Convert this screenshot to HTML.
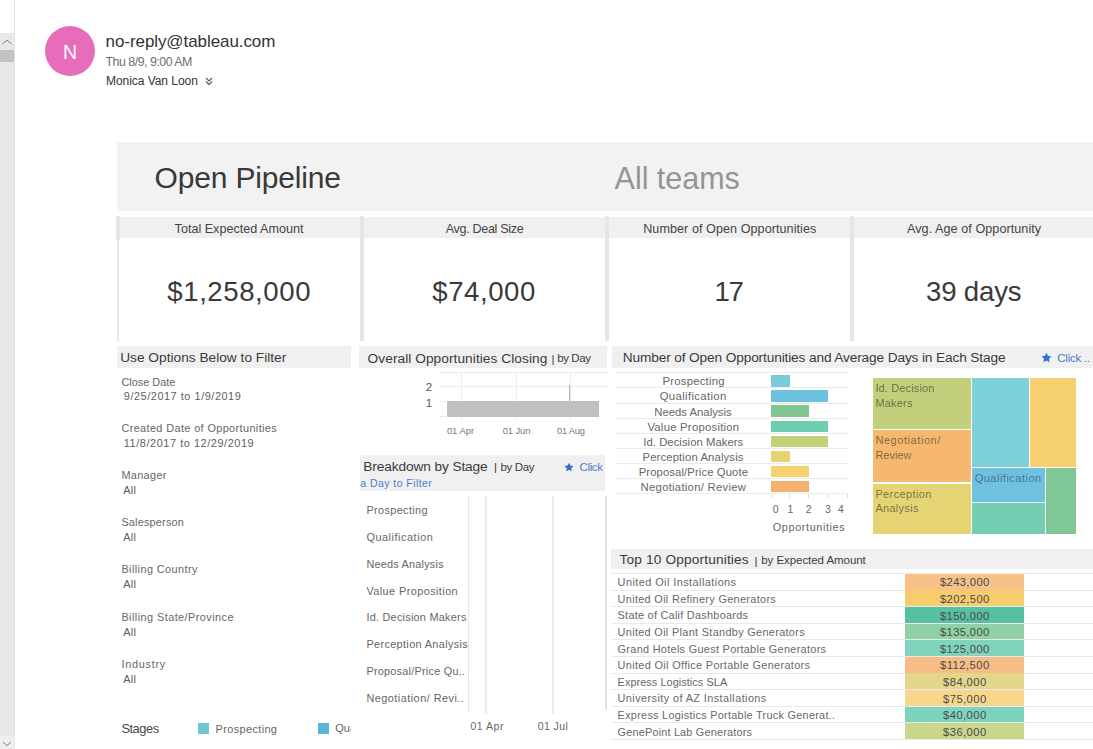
<!DOCTYPE html>
<html><head><meta charset="utf-8"><style>
html,body{margin:0;padding:0;background:#fff;width:1093px;height:749px;overflow:hidden;position:relative}
.t{position:absolute;white-space:nowrap;line-height:1;font-family:"Liberation Sans",sans-serif}
</style></head><body>
<div style="position:absolute;left:0.0px;top:33.0px;width:14.0px;height:716.0px;background:#e8e8e8;"></div>
<div style="position:absolute;left:14.0px;top:0.0px;width:1.0px;height:749.0px;background:#e3e3e3;"></div>
<div style="position:absolute;left:0.0px;top:50.0px;width:14.0px;height:12.0px;background:#c2c2c2;"></div>
<svg style="position:absolute;left:0;top:35px" width="14" height="14"><path d="M2.5 9 L7 5.2 L11.5 9" fill="none" stroke="#7a7a7a" stroke-width="1"/></svg>
<div style="position:absolute;left:0.0px;top:736.0px;width:14.0px;height:13.0px;background:#efefef;"></div>
<svg style="position:absolute;left:0;top:737px" width="14" height="12"><path d="M3 5 L7 8.6 L11 5" fill="none" stroke="#7a7a7a" stroke-width="1"/></svg>
<div style="position:absolute;left:45px;top:26px;width:50px;height:50px;border-radius:50%;background:#e76dba"></div>
<svg style="position:absolute;left:204px;top:76px" width="10" height="10"><path d="M2 2 L5 5 L8 2 M2 5.5 L5 8.5 L8 5.5" fill="none" stroke="#555" stroke-width="1.1"/></svg>
<div style="position:absolute;left:117.0px;top:141.5px;width:976.0px;height:69.0px;background:#f2f2f2;"></div>
<div style="position:absolute;left:117.0px;top:217.0px;width:243.0px;height:21.0px;background:#f0f0f0;"></div>
<div style="position:absolute;left:364.0px;top:217.0px;width:241.0px;height:21.0px;background:#f0f0f0;"></div>
<div style="position:absolute;left:609.0px;top:217.0px;width:241.0px;height:21.0px;background:#f0f0f0;"></div>
<div style="position:absolute;left:854.0px;top:217.0px;width:239.0px;height:21.0px;background:#f0f0f0;"></div>
<div style="position:absolute;left:116.2px;top:216.0px;width:3.6px;height:23.6px;background:#e6e6e6;"></div>
<div style="position:absolute;left:117.0px;top:239.6px;width:2.2px;height:101.4px;background:#e6e6e6;"></div>
<div style="position:absolute;left:360.0px;top:216.0px;width:4.0px;height:125.0px;background:#e6e6e6;"></div>
<div style="position:absolute;left:605.0px;top:216.0px;width:4.0px;height:125.0px;background:#e6e6e6;"></div>
<div style="position:absolute;left:850.0px;top:216.0px;width:4.0px;height:125.0px;background:#e6e6e6;"></div>
<div style="position:absolute;left:117.0px;top:346.0px;width:234.0px;height:21.7px;background:#f0f0f0;"></div>
<div style="position:absolute;left:359.0px;top:346.0px;width:247.5px;height:21.7px;background:#f0f0f0;"></div>
<div style="position:absolute;left:611.5px;top:346.0px;width:481.5px;height:21.7px;background:#f0f0f0;"></div>
<svg style="position:absolute;left:1041px;top:351.5px" width="11" height="11" viewBox="0 0 24 24"><path d="M12.00 1.50 L15.29 8.47 L22.94 9.45 L17.33 14.73 L18.76 22.30 L12.00 18.60 L5.24 22.30 L6.67 14.73 L1.06 9.45 L8.71 8.47 Z" fill="#2f6fd6"/></svg>
<div style="position:absolute;left:197.8px;top:722.9px;width:11.0px;height:10.7px;background:#6cc7d3;"></div>
<div style="position:absolute;left:318.1px;top:722.9px;width:10.8px;height:10.7px;background:#5ab5d8;"></div>
<div style="position:absolute;left:335px;top:718px;width:16px;height:20px;overflow:hidden"><div style="position:absolute;left:0.3px;top:5px;font:11px/1 'Liberation Sans';color:#666;white-space:nowrap">Qualification</div></div>
<div style="position:absolute;left:440.4px;top:371.5px;width:167.6px;height:1.0px;background:#ececec;"></div>
<div style="position:absolute;left:440.4px;top:385.9px;width:167.6px;height:1.0px;background:#ececec;"></div>
<div style="position:absolute;left:440.4px;top:401.0px;width:5.6px;height:1.0px;background:#ececec;"></div>
<div style="position:absolute;left:440.4px;top:416.3px;width:5.6px;height:1.0px;background:#ececec;"></div>
<div style="position:absolute;left:461.0px;top:372.0px;width:1.0px;height:49.0px;background:#ececec;"></div>
<div style="position:absolute;left:515.5px;top:372.0px;width:1.0px;height:49.0px;background:#ececec;"></div>
<div style="position:absolute;left:570.0px;top:372.0px;width:1.0px;height:49.0px;background:#ececec;"></div>
<div style="position:absolute;left:446.9px;top:401.3px;width:152.5px;height:15.5px;background:#c0c0c0;"></div>
<div style="position:absolute;left:569.2px;top:385.3px;width:1.2px;height:16.2px;background:#b0b0b0;"></div>
<div style="position:absolute;left:360.0px;top:455.0px;width:245.0px;height:36.0px;background:#f0f0f0;"></div>
<svg style="position:absolute;left:563.8px;top:461.5px" width="10" height="10" viewBox="0 0 24 24"><path d="M12.00 1.50 L15.29 8.47 L22.94 9.45 L17.33 14.73 L18.76 22.30 L12.00 18.60 L5.24 22.30 L6.67 14.73 L1.06 9.45 L8.71 8.47 Z" fill="#2f6fd6"/></svg>
<div style="position:absolute;left:467.7px;top:496.0px;width:1.2px;height:215.0px;background:#e6e6e6;"></div>
<div style="position:absolute;left:485.4px;top:496.0px;width:1.2px;height:217.8px;background:#ececec;"></div>
<div style="position:absolute;left:552.4px;top:496.0px;width:1.2px;height:217.8px;background:#ececec;"></div>
<div style="position:absolute;left:605.3px;top:496.0px;width:1.7px;height:214.0px;background:#e3e3e3;"></div>
<div style="position:absolute;left:616.0px;top:372.2px;width:232.0px;height:1.0px;background:#ececec;"></div>
<div style="position:absolute;left:616.0px;top:387.3px;width:232.0px;height:1.0px;background:#ececec;"></div>
<div style="position:absolute;left:616.0px;top:402.5px;width:232.0px;height:1.0px;background:#ececec;"></div>
<div style="position:absolute;left:616.0px;top:417.6px;width:232.0px;height:1.0px;background:#ececec;"></div>
<div style="position:absolute;left:616.0px;top:432.8px;width:232.0px;height:1.0px;background:#ececec;"></div>
<div style="position:absolute;left:616.0px;top:447.9px;width:232.0px;height:1.0px;background:#ececec;"></div>
<div style="position:absolute;left:616.0px;top:463.1px;width:232.0px;height:1.0px;background:#ececec;"></div>
<div style="position:absolute;left:616.0px;top:478.2px;width:232.0px;height:1.0px;background:#ececec;"></div>
<div style="position:absolute;left:616.0px;top:493.4px;width:232.0px;height:1.0px;background:#ececec;"></div>
<div style="position:absolute;left:771.0px;top:375.1px;width:19.0px;height:11.6px;background:#78cbd7;"></div>
<div style="position:absolute;left:771.0px;top:390.2px;width:57.0px;height:11.6px;background:#6ec0df;"></div>
<div style="position:absolute;left:771.0px;top:405.3px;width:38.0px;height:11.6px;background:#80c592;"></div>
<div style="position:absolute;left:771.0px;top:420.5px;width:57.0px;height:11.6px;background:#6fcdb2;"></div>
<div style="position:absolute;left:771.0px;top:435.6px;width:57.0px;height:11.6px;background:#c3cf79;"></div>
<div style="position:absolute;left:771.0px;top:450.7px;width:19.0px;height:11.6px;background:#e5d470;"></div>
<div style="position:absolute;left:771.0px;top:465.8px;width:38.0px;height:11.6px;background:#f7d170;"></div>
<div style="position:absolute;left:771.0px;top:480.9px;width:38.0px;height:11.6px;background:#f5b26e;"></div>
<div style="position:absolute;left:770.8px;top:494.0px;width:1.0px;height:4.0px;background:#dddddd;"></div>
<div style="position:absolute;left:789.1px;top:494.0px;width:1.0px;height:4.0px;background:#dddddd;"></div>
<div style="position:absolute;left:808.2px;top:494.0px;width:1.0px;height:4.0px;background:#dddddd;"></div>
<div style="position:absolute;left:827.3px;top:494.0px;width:1.0px;height:4.0px;background:#dddddd;"></div>
<div style="position:absolute;left:846.5px;top:494.0px;width:1.0px;height:4.0px;background:#dddddd;"></div>
<div style="position:absolute;left:873.2px;top:378.2px;width:97.7px;height:50.7px;background:#c4cf7b;"></div>
<div style="position:absolute;left:873.2px;top:430.0px;width:97.7px;height:52.0px;background:#f6b76e;"></div>
<div style="position:absolute;left:873.2px;top:483.5px;width:97.7px;height:50.1px;background:#e4d473;"></div>
<div style="position:absolute;left:972.3px;top:378.2px;width:56.7px;height:88.4px;background:#7dd0d9;"></div>
<div style="position:absolute;left:1030.3px;top:378.2px;width:45.7px;height:88.4px;background:#f6cf70;"></div>
<div style="position:absolute;left:972.4px;top:467.9px;width:72.5px;height:33.7px;background:#6fc1df;"></div>
<div style="position:absolute;left:972.4px;top:503.0px;width:72.5px;height:30.6px;background:#74ceb4;"></div>
<div style="position:absolute;left:1046.1px;top:467.9px;width:29.7px;height:65.7px;background:#80c796;"></div>
<div style="position:absolute;left:611.0px;top:548.8px;width:482.0px;height:20.4px;background:#f0f0f0;"></div>
<div style="position:absolute;left:611.0px;top:573.0px;width:482.0px;height:1.0px;background:#e9e9e9;"></div>
<div style="position:absolute;left:611.0px;top:589.6px;width:482.0px;height:1.0px;background:#e9e9e9;"></div>
<div style="position:absolute;left:611.0px;top:606.2px;width:482.0px;height:1.0px;background:#e9e9e9;"></div>
<div style="position:absolute;left:611.0px;top:622.8px;width:482.0px;height:1.0px;background:#e9e9e9;"></div>
<div style="position:absolute;left:611.0px;top:639.4px;width:482.0px;height:1.0px;background:#e9e9e9;"></div>
<div style="position:absolute;left:611.0px;top:656.0px;width:482.0px;height:1.0px;background:#e9e9e9;"></div>
<div style="position:absolute;left:611.0px;top:672.6px;width:482.0px;height:1.0px;background:#e9e9e9;"></div>
<div style="position:absolute;left:611.0px;top:689.2px;width:482.0px;height:1.0px;background:#e9e9e9;"></div>
<div style="position:absolute;left:611.0px;top:705.8px;width:482.0px;height:1.0px;background:#e9e9e9;"></div>
<div style="position:absolute;left:611.0px;top:722.4px;width:482.0px;height:1.0px;background:#e9e9e9;"></div>
<div style="position:absolute;left:611.0px;top:739.0px;width:482.0px;height:1.0px;background:#e9e9e9;"></div>
<div style="position:absolute;left:905.3px;top:573.8px;width:118.7px;height:15.8px;background:#f9c18a;"></div>
<div style="position:absolute;left:905.3px;top:590.4px;width:118.7px;height:15.8px;background:#f7cc6d;"></div>
<div style="position:absolute;left:905.3px;top:607.0px;width:118.7px;height:15.8px;background:#56c1a2;"></div>
<div style="position:absolute;left:905.3px;top:623.6px;width:118.7px;height:15.8px;background:#8fd0a5;"></div>
<div style="position:absolute;left:905.3px;top:640.2px;width:118.7px;height:15.8px;background:#80d3bd;"></div>
<div style="position:absolute;left:905.3px;top:656.8px;width:118.7px;height:15.8px;background:#f8bd86;"></div>
<div style="position:absolute;left:905.3px;top:673.4px;width:118.7px;height:15.8px;background:#e3d68a;"></div>
<div style="position:absolute;left:905.3px;top:690.0px;width:118.7px;height:15.8px;background:#f9d68e;"></div>
<div style="position:absolute;left:905.3px;top:706.6px;width:118.7px;height:15.8px;background:#7ed3bd;"></div>
<div style="position:absolute;left:905.3px;top:723.2px;width:118.7px;height:15.8px;background:#c8d78a;"></div>
<div class="t" style="left:63.0px;top:43.1px;font-size:19.5px;color:#ffffff;">N</div>
<div class="t" style="left:105.6px;top:33.2px;font-size:17px;color:#333333;letter-spacing:-0.08px;">no-reply@tableau.com</div>
<div class="t" style="left:105.5px;top:56.2px;font-size:12.4px;color:#707070;letter-spacing:-0.50px;">Thu 8/9, 9:00 AM</div>
<div class="t" style="left:106.0px;top:75.2px;font-size:12px;color:#333333;letter-spacing:-0.05px;">Monica Van Loon</div>
<div class="t" style="left:154.6px;top:162.7px;font-size:30px;color:#393939;letter-spacing:-0.17px;">Open Pipeline</div>
<div class="t" style="left:614.6px;top:162.6px;font-size:30.5px;color:#949494;letter-spacing:-0.03px;">All teams</div>
<div class="t" style="left:174.6px;top:222.8px;font-size:12.6px;color:#444;">Total Expected Amount</div>
<div class="t" style="left:445.7px;top:222.8px;font-size:12.6px;color:#444;letter-spacing:-0.33px;">Avg. Deal Size</div>
<div class="t" style="left:643.2px;top:222.8px;font-size:12.6px;color:#444;letter-spacing:0.06px;">Number of Open Opportunities</div>
<div class="t" style="left:907.0px;top:222.8px;font-size:12.6px;color:#444;letter-spacing:0.06px;">Avg. Age of Opportunity</div>
<div class="t" style="left:167.3px;top:277.9px;font-size:27.6px;color:#3a3a3a;letter-spacing:0.57px;">$1,258,000</div>
<div class="t" style="left:432.3px;top:278.0px;font-size:27.6px;color:#3a3a3a;letter-spacing:0.54px;">$74,000</div>
<div class="t" style="left:714.5px;top:278.2px;font-size:27.6px;color:#3a3a3a;letter-spacing:-1.39px;">17</div>
<div class="t" style="left:926.0px;top:278.2px;font-size:27.6px;color:#3a3a3a;letter-spacing:-0.17px;">39 days</div>
<div class="t" style="left:120.2px;top:351.0px;font-size:13.7px;color:#3a3a3a;letter-spacing:0.01px;">Use Options Below to Filter</div>
<div class="t" style="left:367.6px;top:351.5px;font-size:13.7px;color:#3a3a3a;letter-spacing:0.06px;">Overall Opportunities Closing</div>
<div class="t" style="left:551.5px;top:353.9px;font-size:11.5px;color:#333;">|</div>
<div class="t" style="left:557.2px;top:353.2px;font-size:11.5px;color:#3d3d3d;letter-spacing:-0.40px;">by Day</div>
<div class="t" style="left:622.8px;top:350.9px;font-size:13.7px;color:#3a3a3a;letter-spacing:-0.14px;">Number of Open Opportunities and Average Days in Each Stage</div>
<div class="t" style="left:1057.3px;top:352.9px;font-size:11.5px;color:#4d7bcb;letter-spacing:-0.26px;">Click ..</div>
<div class="t" style="left:121.4px;top:376.7px;font-size:10.9px;color:#666;letter-spacing:0.01px;">Close Date</div>
<div class="t" style="left:123.8px;top:391.3px;font-size:10.9px;color:#5e5e5e;letter-spacing:0.55px;">9/25/2017 to 1/9/2019</div>
<div class="t" style="left:121.4px;top:423.4px;font-size:10.9px;color:#666;letter-spacing:0.38px;">Created Date of Opportunities</div>
<div class="t" style="left:123.8px;top:438.0px;font-size:10.9px;color:#5e5e5e;letter-spacing:0.57px;">11/8/2017 to 12/29/2019</div>
<div class="t" style="left:121.4px;top:469.9px;font-size:10.9px;color:#666;letter-spacing:0.34px;">Manager</div>
<div class="t" style="left:123.3px;top:484.5px;font-size:10.9px;color:#5e5e5e;letter-spacing:0.25px;">All</div>
<div class="t" style="left:121.4px;top:517.0px;font-size:10.9px;color:#666;letter-spacing:0.19px;">Salesperson</div>
<div class="t" style="left:123.3px;top:531.6px;font-size:10.9px;color:#5e5e5e;letter-spacing:0.25px;">All</div>
<div class="t" style="left:121.4px;top:564.3px;font-size:10.9px;color:#666;letter-spacing:0.42px;">Billing Country</div>
<div class="t" style="left:123.3px;top:578.9px;font-size:10.9px;color:#5e5e5e;letter-spacing:0.25px;">All</div>
<div class="t" style="left:121.4px;top:612.3px;font-size:10.9px;color:#666;letter-spacing:0.44px;">Billing State/Province</div>
<div class="t" style="left:123.3px;top:626.9px;font-size:10.9px;color:#5e5e5e;letter-spacing:0.25px;">All</div>
<div class="t" style="left:121.4px;top:659.2px;font-size:10.9px;color:#666;letter-spacing:0.72px;">Industry</div>
<div class="t" style="left:123.3px;top:673.8px;font-size:10.9px;color:#5e5e5e;letter-spacing:0.25px;">All</div>
<div class="t" style="left:121.4px;top:723.0px;font-size:12.8px;color:#484848;letter-spacing:-0.43px;">Stages</div>
<div class="t" style="left:215.6px;top:723.7px;font-size:11px;color:#666;letter-spacing:0.33px;">Prospecting</div>
<div class="t" style="left:425.8px;top:382.1px;font-size:11.5px;color:#555;">2</div>
<div class="t" style="left:425.8px;top:397.8px;font-size:11.5px;color:#555;">1</div>
<div class="t" style="left:446.9px;top:427.1px;font-size:9.3px;color:#777;letter-spacing:0.06px;">01 Apr</div>
<div class="t" style="left:502.7px;top:427.1px;font-size:9.3px;color:#777;letter-spacing:-0.04px;">01 Jun</div>
<div class="t" style="left:557.0px;top:427.1px;font-size:9.3px;color:#777;letter-spacing:-0.19px;">01 Aug</div>
<div class="t" style="left:363.3px;top:460.0px;font-size:13.7px;color:#3a3a3a;letter-spacing:-0.11px;">Breakdown by Stage</div>
<div class="t" style="left:494.0px;top:462.4px;font-size:11.5px;color:#333;">|</div>
<div class="t" style="left:500.5px;top:461.7px;font-size:11.5px;color:#3d3d3d;letter-spacing:-0.38px;">by Day</div>
<div class="t" style="left:579.6px;top:461.9px;font-size:11.5px;color:#4d7bcb;letter-spacing:-0.40px;">Click</div>
<div class="t" style="left:360.3px;top:478.4px;font-size:10.5px;color:#4d7bcb;letter-spacing:0.44px;">a Day to Filter</div>
<div class="t" style="left:366.4px;top:505.2px;font-size:10.9px;color:#666;letter-spacing:0.37px;">Prospecting</div>
<div class="t" style="left:366.4px;top:532.0px;font-size:10.9px;color:#666;letter-spacing:0.54px;">Qualification</div>
<div class="t" style="left:366.4px;top:558.8px;font-size:10.9px;color:#666;letter-spacing:0.21px;">Needs Analysis</div>
<div class="t" style="left:366.4px;top:585.6px;font-size:10.9px;color:#666;letter-spacing:0.42px;">Value Proposition</div>
<div class="t" style="left:366.4px;top:612.4px;font-size:10.9px;color:#666;letter-spacing:0.24px;">Id. Decision Makers</div>
<div class="t" style="left:366.4px;top:639.2px;font-size:10.9px;color:#666;letter-spacing:0.35px;">Perception Analysis</div>
<div class="t" style="left:366.4px;top:666.0px;font-size:10.9px;color:#666;letter-spacing:0.23px;">Proposal/Price Qu..</div>
<div class="t" style="left:366.4px;top:692.8px;font-size:10.9px;color:#666;letter-spacing:0.47px;">Negotiation/ Revi..</div>
<div class="t" style="left:470.4px;top:720.7px;font-size:10.5px;color:#666;letter-spacing:0.53px;">01 Apr</div>
<div class="t" style="left:537.8px;top:720.7px;font-size:10.5px;color:#666;letter-spacing:0.40px;">01 Jul</div>
<div class="t" style="left:662.5px;top:376.2px;font-size:11.3px;color:#666;letter-spacing:0.24px;">Prospecting</div>
<div class="t" style="left:659.7px;top:391.3px;font-size:11.3px;color:#666;letter-spacing:0.37px;">Qualification</div>
<div class="t" style="left:654.3px;top:406.5px;font-size:11.3px;color:#666;letter-spacing:0.01px;">Needs Analysis</div>
<div class="t" style="left:647.4px;top:421.6px;font-size:11.3px;color:#666;letter-spacing:0.25px;">Value Proposition</div>
<div class="t" style="left:643.3px;top:436.7px;font-size:11.3px;color:#666;letter-spacing:0.04px;">Id. Decision Makers</div>
<div class="t" style="left:642.5px;top:451.8px;font-size:11.3px;color:#666;letter-spacing:0.13px;">Perception Analysis</div>
<div class="t" style="left:638.7px;top:466.9px;font-size:11.3px;color:#666;letter-spacing:0.10px;">Proposal/Price Quote</div>
<div class="t" style="left:640.6px;top:482.1px;font-size:11.3px;color:#666;letter-spacing:0.27px;">Negotiation/ Review</div>
<div class="t" style="left:772.8px;top:504.8px;font-size:10.4px;color:#666;">0</div>
<div class="t" style="left:787.4px;top:504.8px;font-size:10.4px;color:#666;">1</div>
<div class="t" style="left:805.8px;top:504.8px;font-size:10.4px;color:#666;">2</div>
<div class="t" style="left:824.9px;top:504.8px;font-size:10.4px;color:#666;">3</div>
<div class="t" style="left:838.0px;top:504.8px;font-size:10.4px;color:#666;">4</div>
<div class="t" style="left:772.8px;top:522.0px;font-size:10.9px;color:#666;letter-spacing:0.59px;">Opportunities</div>
<div class="t" style="left:875.4px;top:383.2px;font-size:11px;color:rgba(40,40,30,0.58);letter-spacing:0.14px;">Id. Decision</div>
<div class="t" style="left:875.4px;top:398.0px;font-size:11px;color:rgba(40,40,30,0.58);letter-spacing:0.19px;">Makers</div>
<div class="t" style="left:875.4px;top:434.9px;font-size:11px;color:rgba(40,40,30,0.58);letter-spacing:0.57px;">Negotiation/</div>
<div class="t" style="left:875.4px;top:450.3px;font-size:11px;color:rgba(40,40,30,0.58);letter-spacing:-0.01px;">Review</div>
<div class="t" style="left:875.4px;top:488.6px;font-size:11px;color:rgba(40,40,30,0.58);letter-spacing:0.38px;">Perception</div>
<div class="t" style="left:875.4px;top:502.5px;font-size:11px;color:rgba(40,40,30,0.58);letter-spacing:0.29px;">Analysis</div>
<div class="t" style="left:974.7px;top:473.3px;font-size:11px;color:rgba(40,60,90,0.6);letter-spacing:0.50px;">Qualification</div>
<div class="t" style="left:619.5px;top:553.4px;font-size:13.7px;color:#3a3a3a;letter-spacing:0.15px;">Top 10 Opportunities</div>
<div class="t" style="left:754.5px;top:555.9px;font-size:11.5px;color:#333;">|</div>
<div class="t" style="left:761.2px;top:555.1px;font-size:11.5px;color:#3d3d3d;letter-spacing:-0.05px;">by Expected Amount</div>
<div class="t" style="left:617.6px;top:577.2px;font-size:10.9px;color:#686868;letter-spacing:0.44px;">United Oil Installations</div>
<div class="t" style="left:940.0px;top:577.3px;font-size:11.2px;color:#4a4a4a;letter-spacing:0.36px;">$243,000</div>
<div class="t" style="left:617.6px;top:593.8px;font-size:10.9px;color:#686868;letter-spacing:0.32px;">United Oil Refinery Generators</div>
<div class="t" style="left:940.0px;top:593.9px;font-size:11.2px;color:#4a4a4a;letter-spacing:0.36px;">$202,500</div>
<div class="t" style="left:617.6px;top:610.4px;font-size:10.9px;color:#686868;letter-spacing:0.26px;">State of Calif Dashboards</div>
<div class="t" style="left:940.0px;top:610.5px;font-size:11.2px;color:#4a4a4a;letter-spacing:0.36px;">$150,000</div>
<div class="t" style="left:617.6px;top:627.0px;font-size:10.9px;color:#686868;letter-spacing:0.32px;">United Oil Plant Standby Generators</div>
<div class="t" style="left:940.0px;top:627.1px;font-size:11.2px;color:#4a4a4a;letter-spacing:0.36px;">$135,000</div>
<div class="t" style="left:617.6px;top:643.6px;font-size:10.9px;color:#686868;letter-spacing:0.30px;">Grand Hotels Guest Portable Generators</div>
<div class="t" style="left:940.0px;top:643.7px;font-size:11.2px;color:#4a4a4a;letter-spacing:0.36px;">$125,000</div>
<div class="t" style="left:617.6px;top:660.2px;font-size:10.9px;color:#686868;letter-spacing:0.34px;">United Oil Office Portable Generators</div>
<div class="t" style="left:940.0px;top:660.3px;font-size:11.2px;color:#4a4a4a;letter-spacing:0.48px;">$112,500</div>
<div class="t" style="left:617.6px;top:676.8px;font-size:10.9px;color:#686868;letter-spacing:0.06px;">Express Logistics SLA</div>
<div class="t" style="left:943.1px;top:676.9px;font-size:11.2px;color:#4a4a4a;letter-spacing:0.43px;">$84,000</div>
<div class="t" style="left:617.6px;top:693.4px;font-size:10.9px;color:#686868;letter-spacing:0.41px;">University of AZ Installations</div>
<div class="t" style="left:943.1px;top:693.5px;font-size:11.2px;color:#4a4a4a;letter-spacing:0.43px;">$75,000</div>
<div class="t" style="left:617.6px;top:710.0px;font-size:10.9px;color:#686868;letter-spacing:0.27px;">Express Logistics Portable Truck Generat..</div>
<div class="t" style="left:943.1px;top:710.1px;font-size:11.2px;color:#4a4a4a;letter-spacing:0.43px;">$40,000</div>
<div class="t" style="left:617.6px;top:726.6px;font-size:10.9px;color:#686868;letter-spacing:0.18px;">GenePoint Lab Generators</div>
<div class="t" style="left:943.1px;top:726.7px;font-size:11.2px;color:#4a4a4a;letter-spacing:0.43px;">$36,000</div>
</body></html>
